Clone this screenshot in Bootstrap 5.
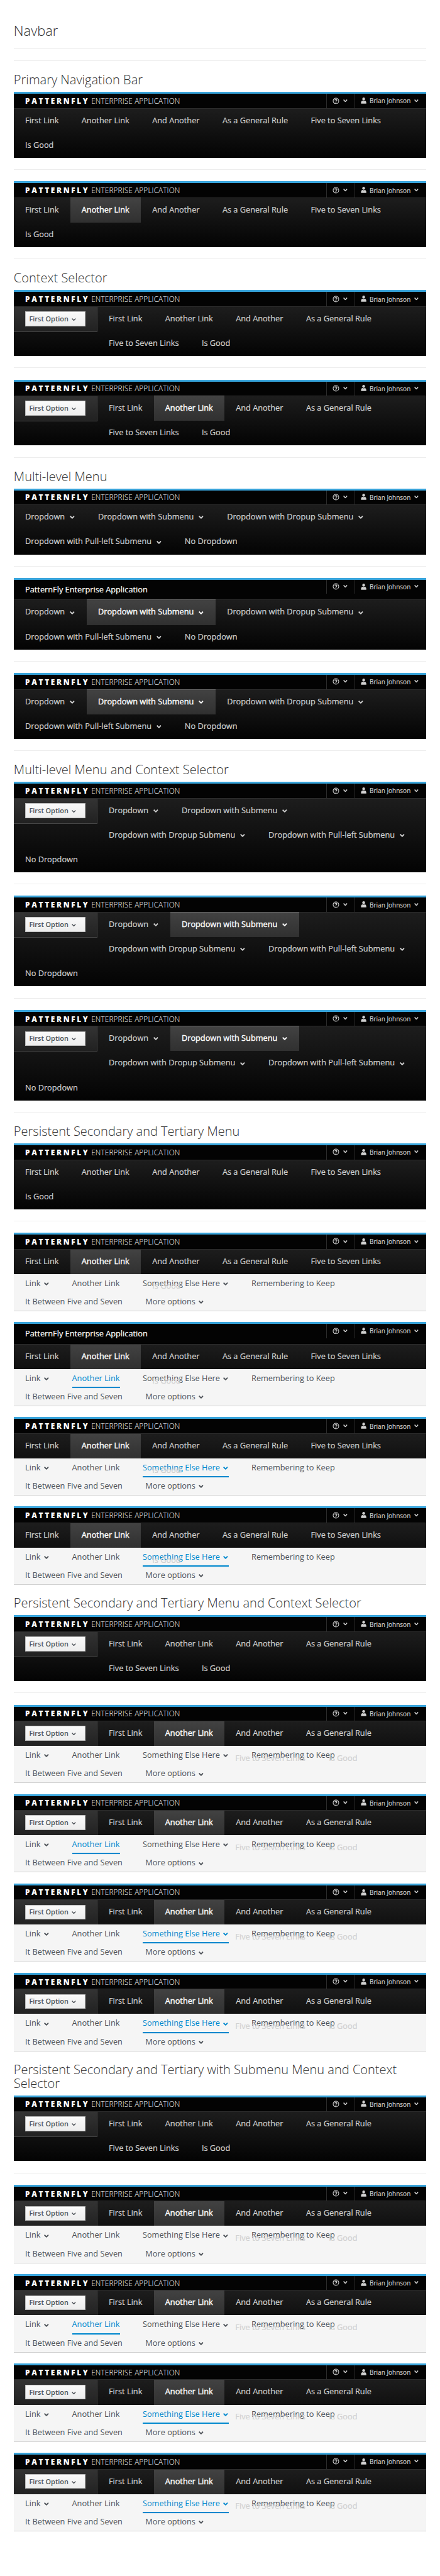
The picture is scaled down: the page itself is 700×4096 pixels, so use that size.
<!DOCTYPE html>
<html lang="en">
<head>
<meta charset="utf-8">
<meta name="viewport" content="width=device-width, initial-scale=1">
<title>Navbar</title>
<link href="https://cdn.jsdelivr.net/npm/bootstrap@5.3.0/dist/css/bootstrap.min.css" rel="stylesheet">
<style>
/* 1rem is ten design units */
html{font-size:9.1083px}
body{font-family:"Open Sans",sans-serif;font-size:1.4rem;line-height:1;color:#333;background:#fff}
.page{padding:4.05rem 2.4rem 0}
h1,h2{font-weight:300;margin:0;color:#333}
h1{font-size:2.4rem;line-height:2.6rem;height:4.4rem}
h2{font-size:2.2rem;line-height:2.4rem;padding:.1rem 0 .9rem}
hr{margin:2rem 0 calc(2.1rem - 1px);border-top:1px solid #ededed;opacity:1}
.pf{position:relative;background:#030303}
.pf.persist{margin-bottom:1.9rem}
.pf-head{height:2.8rem;border-top:3px solid #39a5dc;padding-left:2rem}
.pf-head.tall{height:3.8rem}
.pf-brand{display:block;width:28rem;height:2.5rem;overflow:visible;margin-top:calc(.3rem - 3px)}
.pf-text{font-size:1.4rem;line-height:3.45rem;color:#fff;-webkit-text-stroke:.2px}
.pf-util{height:calc(2.8rem - 3px);color:#d1d1d1;font-size:1.1rem;-webkit-text-stroke:.15px}
.pf-util>span{border-left:1px solid #2b2b2b;display:flex;align-items:center;height:100%}
.u-help{width:4.95rem;padding-left:1rem}
.u-user{width:12.55rem;padding-left:1rem}
svg{fill:currentColor;flex:none}
.i-help{width:1.2rem;height:1.2rem;margin-top:-.1rem}
.i-user{width:1rem;height:1.1rem;margin-top:-.1rem}
.u-name{margin-left:.55rem}
.i-chev{fill:none;stroke:currentColor;overflow:visible}
.pf-util .i-chev{width:.75rem;height:.48rem;margin-left:.68rem;margin-top:-.15rem;stroke-width:1.8}
.pf-main{border-top:1px solid #2c2c2c;background:linear-gradient(#1d1d1d,#030303);min-height:4.4rem}
.pf-main .nav{display:flow-root;margin:0;min-height:calc(4.4rem - 1px)}
.pf-main .nav-item{height:4.3rem}
.pf-main .nav-link{display:block;padding:0 2rem;height:4.3rem;line-height:4.08rem;color:#d1d1d1;white-space:nowrap;-webkit-text-stroke:.2px}
.pf-main .nav-link.active{color:#fff;height:4.4rem;margin-top:-1px;border-top:1px solid #676767;background:linear-gradient(#424242,#303030);-webkit-text-stroke:.35px}
.pf-main .i-chev{width:.85rem;height:.53rem;margin:0 .1rem 0 .85rem;stroke-width:1.9}
.persist .pf-main{height:4.4rem;overflow:hidden;background:linear-gradient(#1d1d1d,#101010)}
.ctx{width:14.6rem;height:4.4rem;padding:.8rem 2rem 0;border-right:1px solid #464646;border-bottom:1px solid #464646;background:linear-gradient(#333,#212121)}
.persist .ctx{border-bottom:0}
.ctx-btn{width:10.5rem;height:2.6rem;padding:.1rem 0 0 .6rem;border:1px solid #bbb;background:linear-gradient(#fafafa,#ededed);color:#4d5258;font-size:1.2rem;font-weight:600;border-radius:0}
.ctx-btn .i-chev{width:.75rem;height:.47rem;margin:.15rem 0 0 .6rem;stroke-width:1.6}
.pf-sub{height:6.5rem;background:#f5f5f5;border-bottom:1px solid #d1d1d1}
.pf-sub .nav-link{padding:0;margin:0 2rem;height:3.2rem;line-height:3.2rem;color:#4d5258;white-space:nowrap}
.pf-sub .i-chev{width:.85rem;height:.53rem;margin:0 .05rem 0 .6rem;stroke-width:1.9}
.pf-sub .nav-link.active{color:#0088ce;box-shadow:0 calc(2px - .1rem) 0 #0088ce;border-bottom:.1rem solid #0088ce}
/* primary links that spill over the secondary bar */
.spill{position:absolute;top:8.35rem;left:22.2rem;line-height:1.9rem;color:#d1d1d1;gap:4.1rem;padding-left:2rem;white-space:nowrap;-webkit-text-stroke:.2px}
.has-ctx .spill{left:36.7rem}
.tall~.spill{top:9.35rem}
</style>
</head>
<body>
<svg width="0" height="0" class="position-absolute">
<symbol id="chev" viewBox="0 0 8 5"><path d="M.7.6 4 4.1 7.3.6"/></symbol>
<symbol id="help" viewBox="0 0 12 12"><circle cx="6" cy="6" r="4.9" fill="none" stroke="currentColor" stroke-width="1.2"/><path d="M4.3 4.9C4.3 2.6 7.8 2.7 7.7 4.7 7.7 5.8 6.1 5.9 6 7.1" fill="none" stroke="currentColor" stroke-width="1.5"/><path d="M5.2 7.8h1.6v1.4H5.2z"/></symbol>
<symbol id="user" viewBox="0 0 10 11"><ellipse cx="5" cy="2.6" rx="2.4" ry="2.6"/><path d="M.4 10.8V9C.4 6.800 1.600 5.900 3.200 5.500Q5 6.700 6.800 5.500C8.400 5.900 9.600 6.800 9.600 9v1.800z"/></symbol>
</svg>
<main class="page" id="page"></main>
<script src="https://cdn.jsdelivr.net/npm/bootstrap@5.3.0/dist/js/bootstrap.bundle.min.js"></script>
<script>
const chev = '<svg class="i-chev"><use href="#chev"/></svg>';
const label = t => t.replace('^', chev);
const plain = ['First Link', 'Another Link', 'And Another', 'As a General Rule', 'Five to Seven Links', 'Is Good'];
const multi = ['Dropdown^', 'Dropdown with Submenu^', 'Dropdown with Dropup Submenu^', 'Dropdown with Pull-left Submenu^', 'No Dropdown'];
const second = ['Link^', 'Another Link', 'Something Else Here^', 'Remembering to Keep', 'It Between Five and Seven', 'More options^'];
const items = (list, active) => list.map((t, i) =>
  `<li class="nav-item float-start"><a class="nav-link${i === active ? ' active' : ''}">${label(t)}</a></li>`).join('');

function navbar(o) {
  const links = o.multi ? multi : plain;
  const shown = o.sub ? (o.ctx ? 4 : 5) : links.length;
  const brand = o.text
    ? '<div class="pf-text">PatternFly Enterprise Application</div>'
    : `<svg class="pf-brand" viewBox="0 0 280 25" fill="#fff"><text x="0" y="17.5" font-size="13" font-weight="800" fill="#fff" textLength="109.500">PATTERNFLY</text><text x="115.500" y="17.5" font-size="13" font-weight="300" fill="#fff" textLength="155">ENTERPRISE APPLICATION</text></svg>`;
  return `<nav class="pf${o.sub ? ' persist' : ''}${o.ctx ? ' has-ctx' : ''}">
    <div class="pf-head d-flex justify-content-between${o.text ? ' tall' : ''}">${brand}
      <div class="pf-util d-flex"><span class="u-help"><svg class="i-help"><use href="#help"/></svg>${chev}</span><span class="u-user"><svg class="i-user"><use href="#user"/></svg><b class="u-name fw-normal">Brian Johnson</b>${chev}</span></div>
    </div>
    <div class="pf-main"><ul class="nav list-unstyled">${o.ctx ? `<li class="ctx float-start"><button class="ctx-btn d-flex align-items-center">First Option${chev}</button></li>` : ''}${items(links.slice(0, shown), o.on ? 1 : -1)}</ul></div>
    ${o.sub ? `<ul class="pf-sub list-unstyled m-0">${items(second, o.subOn ?? -1)}</ul><div class="spill d-flex">${links.slice(shown).map(t => `<span>${t}</span>`).join('')}</div>` : ''}
  </nav>${o.sub ? '' : '<hr>'}`;
}

const persistent = ctx => [{ctx}, {ctx, on: 1, sub: 1}, {ctx, on: 1, sub: 1, subOn: 1, text: !ctx}, {ctx, on: 1, sub: 1, subOn: 2}, {ctx, on: 1, sub: 1, subOn: 2}];
const sections = [
  ['Primary Navigation Bar', [{}, {on: 1}]],
  ['Context Selector', [{ctx: 1}, {ctx: 1, on: 1}]],
  ['Multi-level Menu', [{multi: 1}, {multi: 1, on: 1, text: 1}, {multi: 1, on: 1}]],
  ['Multi-level Menu and Context Selector', [{multi: 1, ctx: 1}, {multi: 1, ctx: 1, on: 1}, {multi: 1, ctx: 1, on: 1}]],
  ['Persistent Secondary and Tertiary Menu', persistent(0)],
  ['Persistent Secondary and Tertiary Menu and Context Selector', persistent(1)],
  ['Persistent Secondary and Tertiary with Submenu Menu and Context Selector', persistent(1)]
];
document.getElementById('page').innerHTML = '<h1>Navbar</h1><hr class="mt-0"><hr>' +
  sections.map(([title, bars]) => `<section><h2>${title}</h2>${bars.map(navbar).join('')}</section>`).join('');
</script>
</body>
</html>
